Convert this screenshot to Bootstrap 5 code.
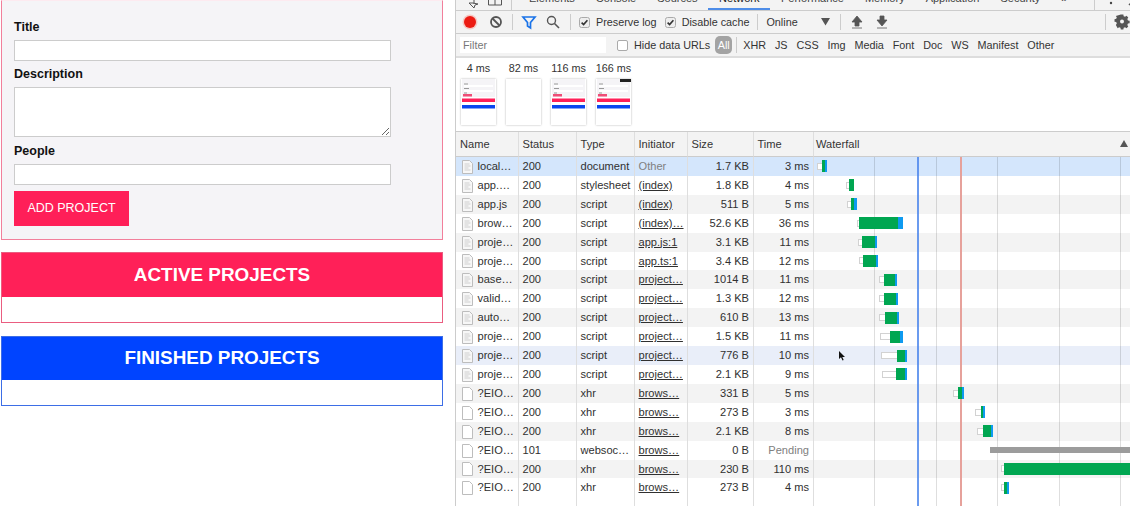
<!DOCTYPE html>
<html lang="en">
<head>
<meta charset="utf-8">
<title>Project manager with DevTools</title>
<link href="https://cdn.jsdelivr.net/npm/bootstrap@5.3.0/dist/css/bootstrap.min.css" rel="stylesheet">
<style>
html,body{height:506px;overflow:hidden;background:#fff}
body{font-family:"Liberation Sans",Arial,sans-serif;color:#303030}
.app-pane{width:455px;flex:none}
.form-box{margin-left:1px;width:442px;background:#f5f4f7;border:1px solid #f27f9b;border-top-color:#fdeaf0;padding:18px 12px 13px}
.fld-label{display:block;font-size:12.5px;font-weight:700;line-height:16px;color:#111;margin:0 0 5px}
.fld-input{display:block;width:377px;height:21px;padding:0 3px;border:1px solid #ccc;border-radius:0;margin-bottom:5px;font-size:12px}
.fld-area{height:50px;margin-bottom:6px}
.fld-last{margin-bottom:6px}
.add-btn{height:35px;width:115px;padding:0;background:#ff1f58;border:1px solid #ff1f58;border-radius:0;color:#fff;font-size:12.5px;line-height:33px}
.add-btn:hover{background:#ff1f58;color:#fff}
.proj-box{margin-left:1px;width:442px;height:71px;margin-top:12px;border:1px solid #ea5d80}
.proj-box.done{margin-top:13px;height:70px;border-color:#3d6ee6}
.proj-head{height:44px;background:#ff2058;color:#fff;font-size:18.9px;font-weight:700;margin:0;line-height:44px}
.done .proj-head{background:#0044ff;height:43px;line-height:42px}
.dev-pane{flex:1;min-width:0;border-left:1px solid #ccc;font-size:10.8px;position:relative}
.tab-strip{height:21px;margin-top:-10px;background:#f3f3f3;border-bottom:1px solid #ccc;color:#444;font-size:11px;line-height:17px}
.tab-ico{width:16px;height:20px;flex:none}
.tab-item{padding:0 10.5px;height:20px;flex:none}
.tab-item.on{box-shadow:inset 0 -2px 0 #4e8de8;color:#222;padding:0 11px}
.tool-row{height:23px;background:#f3f3f3;border-bottom:1px solid #ccc;color:#333}
.vsep{width:1px;height:16px;background:#ccc;flex:none}
.slot{width:16px;height:16px;flex:none}
.tick{width:11px;height:11px;flex:none}
.filter-row{height:24px;background:#f3f3f3;border-bottom:2px solid #ddd;color:#333}
.filter-input{width:146px;height:16px;margin-left:4px;border:0;border-radius:0;padding:0 3px;font-size:10.8px;background:#fff}
.filter-input::placeholder{color:#777}
.type-all{width:17px;height:18px;background:#a3a3a3;color:#fff;border-radius:5px;text-align:center;line-height:18px;flex:none}
.type-list{gap:8.9px}
.ml-4px{margin-left:4px}.ml-5px{margin-left:5px}.ml-6px{margin-left:6px}.ml-8px{margin-left:8px}.ml-9px{margin-left:9px}.ml-10px{margin-left:10px}
.overview{height:73px;background:#fff;padding:3px 0 0 5px;gap:10px}
.shot-col{width:35px;text-align:center;flex:none}
.shot-time{white-space:nowrap;font-size:10.8px;line-height:14px;margin:0 -10px 4px;color:#333}
.shot{display:block;width:35px;height:46px;box-shadow:0 0 2px rgba(0,0,0,.3);background:#fff}
.net-wrap{position:relative;border-top:1px solid #ccc}
.table.net-table{table-layout:fixed;width:674px;margin:0;border-collapse:separate;border-spacing:0;font-size:11.1px}
.table.net-table>:not(caption)>*>*{padding:1px 3.5px 0;height:18.9px;line-height:17.9px;border-right:1px solid #dedede;border-bottom:0;white-space:nowrap;overflow:hidden;color:#303030;box-shadow:none}
.table.net-table>thead>tr>th{height:25px;line-height:23px;padding-top:0;font-weight:400;background:#f3f3f3;border-bottom:1px solid #ccc;color:#333}
.table.net-table>thead>tr>th:first-child{padding-left:4px}
.table.net-table>tbody>tr>td{background:#fff}
.table.net-table>tbody>tr.alt>td{background:#f3f3f3}
.table.net-table>tbody>tr.sel>td{background:#d4e6fc}
.table.net-table>tbody>tr.hov>td{background:#e9eef9}
.table.net-table>:not(caption)>*>*:last-child{border-right:0;position:relative;overflow:visible;padding:0 2px}
.table.net-table>tbody>tr.pad>td{height:12px}
.table.net-table>tbody>tr>td.num{text-align:right;padding-right:4px}
.table.net-table>tbody>tr>td.mut{color:#808080}
.table.net-table>tbody>tr>td.lnk{text-decoration:underline;text-underline-offset:1px}
.name-cell{display:flex;align-items:center;gap:5px;overflow:hidden;height:17.9px}
.file-ico{width:11px;height:14px;flex:none;margin-left:2px}
.sort-tri{position:absolute;right:2px;top:8px;width:8px;height:7px;overflow:hidden}
.wf-bar{top:0;bottom:0;z-index:2}
.wf-wait{display:block;height:7px;border:1px solid #d2d2d2;border-right:0;background:#fff;flex:none}
.wf-recv{display:block;height:12px;background:#00a651;flex:none}
.wf-dl{display:block;height:12px;background:#0e9af0;flex:none}
.wf-pend{display:block;height:6px;background:#9c9c9c;flex:none}
.grid-ln{position:absolute;top:25px;bottom:-200px;width:1px;background:rgba(0,0,0,.13);z-index:1}
.grid-ln.dcl{background:rgba(70,130,235,.8);width:1.5px}
.grid-ln.load{background:#e6a19b;width:2px}
.cursor-ico{position:absolute;left:382px;top:219px;width:7px;height:10px;z-index:4}
</style>
</head>
<body>
<svg width="0" height="0" class="position-absolute">
<symbol id="doc" viewBox="0 0 11 14"><path d="M.5.5h7l3 3v10H.5z" fill="#f7f7f7" stroke="#bdbdbd"/><path d="M2.5 4h5M2.5 6h6M2.5 8h4M2.5 10h6" stroke="#cfcfcf"/></symbol>
<symbol id="blank" viewBox="0 0 11 14"><path d="M.5.5h7l3 3v10H.5z" fill="#fff" stroke="#bdbdbd"/></symbol>
<symbol id="tick" viewBox="0 0 11 11"><rect x=".5" y=".5" width="10" height="10" rx="2" fill="#eee" stroke="#aaa"/><path d="M2.6 5.6l2 2 3.8-4.4" fill="none" stroke="#333" stroke-width="1.6"/></symbol>
<symbol id="thumb" viewBox="0 0 35 46"><rect width="35" height="46" fill="#fff"/><rect width="33" height="18" x="1" fill="#f5f4f7"/><rect x="3" y="6" width="29" height="2" fill="#fff"/><rect x="3" y="11" width="29" height="2" fill="#fff"/><rect x="2" y="15" width="9" height="2.500" fill="#ef4d76"/><rect x="1" y="19.500" width="33" height="3.500" fill="#ff2058"/><rect x="1" y="26" width="33" height="3.500" fill="#0a46f0"/><rect x="3" y="4.500" width="4" height="1" fill="#999"/><rect x="3" y="9" width="5" height="1" fill="#999"/><rect x="3" y="13.500" width="3" height="1" fill="#999"/></symbol>
</svg>
<div class="d-flex">
  <main class="app-pane">
    <form class="form-box">
      <label class="fld-label" for="t">Title</label>
      <input id="t" class="form-control fld-input">
      <label class="fld-label" for="d">Description</label>
      <textarea id="d" class="form-control fld-input fld-area"></textarea>
      <label class="fld-label" for="p">People</label>
      <input id="p" class="form-control fld-input fld-last">
      <button type="button" class="btn add-btn">ADD PROJECT</button>
    </form>
    <section class="proj-box"><h2 class="proj-head text-center">ACTIVE PROJECTS</h2></section>
    <section class="proj-box done"><h2 class="proj-head text-center">FINISHED PROJECTS</h2></section>
  </main>

  <div class="dev-pane">
    <div class="tab-strip d-flex align-items-end">
      <svg class="tab-ico ml-6px" viewBox="0 0 16 20"><path d="M3 9h9v5M7 13l5 5 1-3 3-1-5-1z" fill="none" stroke="#555"/></svg>
      <svg class="tab-ico ml-9px" viewBox="0 0 16 20"><path d="M1.500 8h13v7h-13zM8 8v7" fill="none" stroke="#555"/></svg>
      <span class="vsep ml-8px"></span>
      <span class="tab-item" style="margin-left:6.500px">Elements</span><span class="tab-item">Console</span><span class="tab-item">Sources</span><span class="tab-item on">Network</span><span class="tab-item">Performance</span><span class="tab-item">Memory</span><span class="tab-item">Application</span><span class="tab-item">Security</span><span class="tab-item">&raquo;</span>
      <span class="vsep ms-3"></span>
      <svg class="tab-ico ms-2" viewBox="0 0 16 20"><circle cx="8" cy="13" r="1.200" fill="#444"/></svg>
      <svg class="tab-ico" style="margin-left:6px" viewBox="0 0 16 20"><path d="M4 7l8 8M12 7l-8 8" stroke="#555" stroke-width="1.500"/></svg>
    </div>

    <div class="tool-row d-flex align-items-center">
      <svg class="slot ml-6px" viewBox="0 0 16 16"><circle cx="8" cy="8" r="7.500" fill="#f6c9c4"/><circle cx="8" cy="8" r="6" fill="#ec1b12"/></svg>
      <svg class="slot ml-10px" viewBox="0 0 16 16"><circle cx="8" cy="8" r="5" fill="none" stroke="#555" stroke-width="1.800"/><path d="M4.500 4.500l7 7" stroke="#555" stroke-width="1.800"/></svg>
      <span class="vsep ml-8px"></span>
      <svg class="slot ml-8px" viewBox="0 0 16 16"><path d="M2 3h12L9.500 8.500V14l-3-2V8.500z" fill="none" stroke="#1a73e8" stroke-width="1.700"/></svg>
      <svg class="slot ml-8px" viewBox="0 0 16 16"><circle cx="6.500" cy="6.500" r="4" fill="none" stroke="#555" stroke-width="1.400"/><path d="M9.500 9.500l4.500 4.500" stroke="#555" stroke-width="1.600"/></svg>
      <span class="vsep ml-9px"></span>
      <svg class="tick ml-8px"><use href="#tick"/></svg><span class="ml-6px">Preserve log</span>
      <svg class="tick ml-8px"><use href="#tick"/></svg><span class="ml-6px">Disable cache</span>
      <span class="vsep ml-8px"></span>
      <span class="ml-8px">Online</span>
      <svg style="margin-left:23px;flex:none" width="10" height="8" viewBox="0 0 10 8"><path d="M0 0h9L4.500 7.500z" fill="#555"/></svg>
      <span class="vsep" style="margin-left:9px"></span>
      <svg class="slot ml-8px" viewBox="0 0 16 16"><path d="M8 2l5 6h-3v4H6V8H3zM3 14h10" fill="#555" stroke="#555" stroke-width=".8"/></svg>
      <svg class="slot ml-9px" viewBox="0 0 16 16"><path d="M8 12l5-6h-3V2H6v4H3zM3 14h10" fill="#555" stroke="#555" stroke-width=".8"/></svg>
      <span class="vsep ms-auto"></span>
      <svg class="slot ml-8px" viewBox="0 0 16 16"><path d="M6.500 1h3l.4 2 1.600.7 1.700-1.100 2.100 2.100-1.100 1.700.7 1.600 2 .4v3l-2 .4-.7 1.600 1.100 1.700-2.100 2.100-1.700-1.100-1.600.7-.4 2h-3l-.4-2-1.600-.7-1.700 1.100L.7 13.300l1.100-1.700-.7-1.600-2-.4V6.600l2-.4.7-1.600L.7 2.900z" transform="scale(.85) translate(1.500 -.5)" fill="#555"/><circle cx="8" cy="7.600" r="2" fill="#f3f3f3"/></svg>
    </div>

    <div class="filter-row d-flex align-items-center">
      <input class="form-control filter-input" placeholder="Filter">
      <span class="d-block tick" style="margin-left:11px;border:1px solid #aaa;border-radius:2px;background:#fff"></span>
      <span class="ml-6px">Hide data URLs</span>
      <span class="type-all ml-5px">All</span>
      <span class="vsep ml-4px"></span>
      <div class="d-flex type-list ml-6px"><span>XHR</span><span>JS</span><span>CSS</span><span>Img</span><span>Media</span><span>Font</span><span>Doc</span><span>WS</span><span>Manifest</span><span>Other</span></div>
    </div>

    <div class="overview d-flex">
      <div class="shot-col"><p class="shot-time">4 ms</p><svg class="shot"><use href="#thumb"/></svg></div>
      <div class="shot-col"><p class="shot-time">82 ms</p><svg class="shot"></svg></div>
      <div class="shot-col"><p class="shot-time">116 ms</p><svg class="shot"><use href="#thumb"/></svg></div>
      <div class="shot-col"><p class="shot-time">166 ms</p><svg class="shot"><use href="#thumb"/><rect x="24" width="11" height="3" fill="#222"/></svg></div>
    </div>

    <div class="net-wrap">
      <table class="table net-table">
        <colgroup><col style="width:63px"><col style="width:58px"><col style="width:58px"><col style="width:53px"><col style="width:66px"><col style="width:60px"><col></colgroup>
        <thead><tr><th>Name</th><th>Status</th><th>Type</th><th>Initiator</th><th>Size</th><th>Time</th><th>Waterfall<svg class="sort-tri" viewBox="0 0 8 7"><path d="M4 0l4 7H0z" fill="#555"/></svg></th></tr></thead>
        <tbody>
          <tr class="sel"><td><div class="name-cell"><svg class="file-ico"><use href="#doc"/></svg>local…</div></td><td>200</td><td>document</td><td class="mut">Other</td><td class="num">1.7 KB</td><td class="num">3 ms</td><td><div class="wf-bar position-absolute d-flex align-items-center" style="left:3px"><i class="wf-wait" style="width:5px"></i><i class="wf-recv" style="width:2.5px"></i><i class="wf-dl" style="width:2px"></i></div></td></tr>
          <tr><td><div class="name-cell"><svg class="file-ico"><use href="#doc"/></svg>app.…</div></td><td>200</td><td>stylesheet</td><td class="lnk">(index)</td><td class="num">1.8 KB</td><td class="num">4 ms</td><td><div class="wf-bar position-absolute d-flex align-items-center" style="left:32px"><i class="wf-wait" style="width:3.3px"></i><i class="wf-recv" style="width:4.4px"></i></div></td></tr>
          <tr class="alt"><td><div class="name-cell"><svg class="file-ico"><use href="#doc"/></svg>app.js</div></td><td>200</td><td>script</td><td class="lnk">(index)</td><td class="num">511 B</td><td class="num">5 ms</td><td><div class="wf-bar position-absolute d-flex align-items-center" style="left:33.3px"><i class="wf-wait" style="width:4px"></i><i class="wf-recv" style="width:2.7px"></i><i class="wf-dl" style="width:2.7px"></i></div></td></tr>
          <tr><td><div class="name-cell"><svg class="file-ico"><use href="#doc"/></svg>brow…</div></td><td>200</td><td>script</td><td class="lnk">(index)…</td><td class="num">52.6 KB</td><td class="num">36 ms</td><td><div class="wf-bar position-absolute d-flex align-items-center" style="left:42.7px"><i class="wf-wait" style="width:2px"></i><i class="wf-recv" style="width:39.6px"></i><i class="wf-dl" style="width:4.4px"></i></div></td></tr>
          <tr class="alt"><td><div class="name-cell"><svg class="file-ico"><use href="#doc"/></svg>proje…</div></td><td>200</td><td>script</td><td class="lnk">app.js:1</td><td class="num">3.1 KB</td><td class="num">11 ms</td><td><div class="wf-bar position-absolute d-flex align-items-center" style="left:44.3px"><i class="wf-wait" style="width:3.7px"></i><i class="wf-recv" style="width:13px"></i><i class="wf-dl" style="width:1.7px"></i></div></td></tr>
          <tr><td><div class="name-cell"><svg class="file-ico"><use href="#doc"/></svg>proje…</div></td><td>200</td><td>script</td><td class="lnk">app.ts:1</td><td class="num">3.4 KB</td><td class="num">12 ms</td><td><div class="wf-bar position-absolute d-flex align-items-center" style="left:44.7px"><i class="wf-wait" style="width:4.3px"></i><i class="wf-recv" style="width:13px"></i><i class="wf-dl" style="width:1.7px"></i></div></td></tr>
          <tr class="alt"><td><div class="name-cell"><svg class="file-ico"><use href="#doc"/></svg>base…</div></td><td>200</td><td>script</td><td class="lnk">project…</td><td class="num">1014 B</td><td class="num">11 ms</td><td><div class="wf-bar position-absolute d-flex align-items-center" style="left:65.3px"><i class="wf-wait" style="width:4.4px"></i><i class="wf-recv" style="width:11.3px"></i><i class="wf-dl" style="width:1.7px"></i></div></td></tr>
          <tr><td><div class="name-cell"><svg class="file-ico"><use href="#doc"/></svg>valid…</div></td><td>200</td><td>script</td><td class="lnk">project…</td><td class="num">1.3 KB</td><td class="num">12 ms</td><td><div class="wf-bar position-absolute d-flex align-items-center" style="left:65.3px"><i class="wf-wait" style="width:4.4px"></i><i class="wf-recv" style="width:12.3px"></i><i class="wf-dl" style="width:2.3px"></i></div></td></tr>
          <tr class="alt"><td><div class="name-cell"><svg class="file-ico"><use href="#doc"/></svg>auto…</div></td><td>200</td><td>script</td><td class="lnk">project…</td><td class="num">610 B</td><td class="num">13 ms</td><td><div class="wf-bar position-absolute d-flex align-items-center" style="left:65.3px"><i class="wf-wait" style="width:5.4px"></i><i class="wf-recv" style="width:12.7px"></i><i class="wf-dl" style="width:2px"></i></div></td></tr>
          <tr><td><div class="name-cell"><svg class="file-ico"><use href="#doc"/></svg>proje…</div></td><td>200</td><td>script</td><td class="lnk">project…</td><td class="num">1.5 KB</td><td class="num">11 ms</td><td><div class="wf-bar position-absolute d-flex align-items-center" style="left:66.3px"><i class="wf-wait" style="width:9.7px"></i><i class="wf-recv" style="width:10px"></i><i class="wf-dl" style="width:2.7px"></i></div></td></tr>
          <tr class="hov"><td><div class="name-cell"><svg class="file-ico"><use href="#doc"/></svg>proje…</div></td><td>200</td><td>script</td><td class="lnk">project…</td><td class="num">776 B</td><td class="num">10 ms</td><td><div class="wf-bar position-absolute d-flex align-items-center" style="left:67.3px"><i class="wf-wait" style="width:15.7px"></i><i class="wf-recv" style="width:7.7px"></i><i class="wf-dl" style="width:2.3px"></i></div></td></tr>
          <tr><td><div class="name-cell"><svg class="file-ico"><use href="#doc"/></svg>proje…</div></td><td>200</td><td>script</td><td class="lnk">project…</td><td class="num">2.1 KB</td><td class="num">9 ms</td><td><div class="wf-bar position-absolute d-flex align-items-center" style="left:68.3px"><i class="wf-wait" style="width:13.7px"></i><i class="wf-recv" style="width:9px"></i><i class="wf-dl" style="width:2.3px"></i></div></td></tr>
          <tr class="alt"><td><div class="name-cell"><svg class="file-ico"><use href="#blank"/></svg>?EIO…</div></td><td>200</td><td>xhr</td><td class="lnk">brows…</td><td class="num">331 B</td><td class="num">5 ms</td><td><div class="wf-bar position-absolute d-flex align-items-center" style="left:139.3px"><i class="wf-wait" style="width:4.7px"></i><i class="wf-recv" style="width:3.7px"></i><i class="wf-dl" style="width:2.3px"></i></div></td></tr>
          <tr><td><div class="name-cell"><svg class="file-ico"><use href="#blank"/></svg>?EIO…</div></td><td>200</td><td>xhr</td><td class="lnk">brows…</td><td class="num">273 B</td><td class="num">3 ms</td><td><div class="wf-bar position-absolute d-flex align-items-center" style="left:160.7px"><i class="wf-wait" style="width:6px"></i><i class="wf-recv" style="width:2px"></i><i class="wf-dl" style="width:2px"></i></div></td></tr>
          <tr class="alt"><td><div class="name-cell"><svg class="file-ico"><use href="#blank"/></svg>?EIO…</div></td><td>200</td><td>xhr</td><td class="lnk">brows…</td><td class="num">2.1 KB</td><td class="num">8 ms</td><td><div class="wf-bar position-absolute d-flex align-items-center" style="left:163.3px"><i class="wf-wait" style="width:6px"></i><i class="wf-recv" style="width:7.7px"></i><i class="wf-dl" style="width:1.7px"></i></div></td></tr>
          <tr><td><div class="name-cell"><svg class="file-ico"><use href="#blank"/></svg>?EIO…</div></td><td>101</td><td>websoc…</td><td class="lnk">brows…</td><td class="num">0 B</td><td class="num mut">Pending</td><td><div class="wf-bar position-absolute d-flex align-items-center" style="left:176px"><i class="wf-pend" style="width:140px"></i></div></td></tr>
          <tr class="alt"><td><div class="name-cell"><svg class="file-ico"><use href="#blank"/></svg>?EIO…</div></td><td>200</td><td>xhr</td><td class="lnk">brows…</td><td class="num">230 B</td><td class="num">110 ms</td><td><div class="wf-bar position-absolute d-flex align-items-center" style="left:187.3px"><i class="wf-wait" style="width:2.7px"></i><i class="wf-recv" style="width:126px"></i></div></td></tr>
          <tr><td><div class="name-cell"><svg class="file-ico"><use href="#blank"/></svg>?EIO…</div></td><td>200</td><td>xhr</td><td class="lnk">brows…</td><td class="num">273 B</td><td class="num">4 ms</td><td><div class="wf-bar position-absolute d-flex align-items-center" style="left:186.7px"><i class="wf-wait" style="width:3.3px"></i><i class="wf-recv" style="width:2.7px"></i><i class="wf-dl" style="width:2.3px"></i></div></td></tr>
          <tr class="pad"><td></td><td></td><td></td><td></td><td></td><td></td><td></td></tr>
        </tbody>
      </table>
      <i class="grid-ln" style="left:418px"></i>
      <i class="grid-ln dcl" style="left:461px"></i>
      <i class="grid-ln" style="left:480px"></i>
      <i class="grid-ln load" style="left:504px"></i>
      <i class="grid-ln" style="left:541px"></i>
      <i class="grid-ln" style="left:603px"></i>
      <i class="grid-ln" style="left:664px"></i>
      <svg class="cursor-ico" viewBox="0 0 7 10"><path d="M1 0v8l2-1.800L4.500 9.500l1.200-.6L4.300 6H7z" fill="#111"/></svg>
    </div>
  </div>
</div>
</body>
</html>
